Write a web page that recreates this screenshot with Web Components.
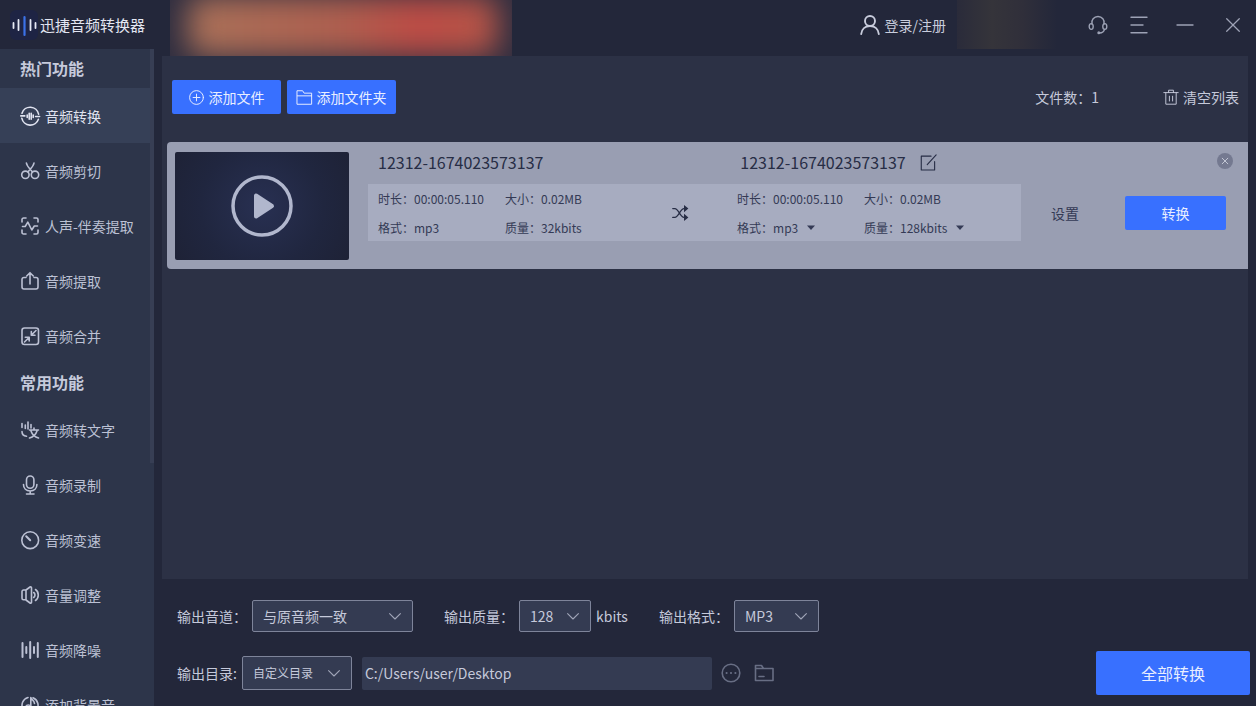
<!DOCTYPE html>
<html lang="zh-CN">
<head>
<meta charset="utf-8">
<title>迅捷音频转换器</title>
<style>
html,body{margin:0;height:100%;background:#23273a}
body{font-family:"Noto Sans CJK SC","Noto Sans",sans-serif;font-size:14px;line-height:20px;color:#c5c9da}
</style>
</head>
<body>
<converter-app></converter-app>
<script>
const ICONS = {
  convert:'<path d="M2 7.200A8.600 8.600 0 0 1 18.600 8.200M18.400 13.200A8.600 8.600 0 0 1 1.800 12.200M.8 9.900h4M15.600 10.500h4"/><path d="M7.200 9v2.400M9.200 7.200v6M11.200 7.200v6M13.200 9v2.400"/>',
  cut:'<circle cx="5.400" cy="13.800" r="3.700"/><circle cx="15" cy="13.800" r="3.700"/><path d="M6.400 2c.5 3.400 3.300 5.500 6 9M14 2c-.5 3.400-3.300 5.500-6 9"/>',
  vocal:'<path d="M2 6V3.600C2 2.700 2.700 2 3.600 2H6M14 2h2.400c.9 0 1.600.7 1.600 1.600V6M18 14v2.400c0 .9-.7 1.600-1.600 1.600H14M6 18H3.600C2.700 18 2 17.300 2 16.400V14M2.500 10.500h2.700l2.600-4.300 4 7.800 2.500-4h3.200"/>',
  extract:'<path d="M6 6.500H4C2.700 6.500 2 7.300 2 8.500V16c0 1.200.8 2 2 2h12c1.200 0 2-.8 2-2V8.500c0-1.200-.7-2-2-2h-2M10 13V2M6.700 5 10 1.700 13.300 5"/>',
  merge:'<rect x="2" y="2" width="16.500" height="16.500" rx="2.500"/><path d="M16 4.500 11.500 9M11.300 5.500v3.700H15M4.500 16 9 11.500M5.300 11.300h3.900V15"/>',
  text:'<path d="M2 3.500v4M5.300 5v3.500M8 2v7M11 4.500V8M2 11.500c0 3 1.500 4.500 4.500 4.800M9.500 10h9M14 8v2M11 11c1 3 3.500 6 7.500 7M17 11c-1 3-4 6-7.500 7"/>',
  mic:'<rect x="6.500" y="1" width="7.400" height="12.300" rx="3.700"/><path d="M3.500 9.500c0 4 2.700 6.500 6.700 6.500s6.700-2.500 6.700-6.500M10.200 16v3M6.500 19h7.500"/>',
  speed:'<circle cx="10.200" cy="10.200" r="8.400"/><path d="m6.200 6.200 4 4" stroke-width="2"/>',
  volume:'<path d="M6 5H3.500C2.700 5 2 5.700 2 6.500v6.800c0 .8.700 1.500 1.500 1.500H6M6 5l4-3c.7-.5 1.500 0 1.500.8v14.400c0 .8-.8 1.300-1.500.8l-4-3zM13.700 7.500c1.700 1.200 1.700 3.800 0 5M15.500 4.500c3.700 2.500 3.700 8.500 0 11"/>',
  noise:'<path d="M2.500 3v14M6.300 7v6M10.200 2v16M14 7v6M17.800 3v14" stroke-width="2"/>',
  music:'<path d="M8 2.500a8 8 0 1 0 5 .3"/><circle cx="8.300" cy="12.500" r="2.500"/><path d="M10.800 12.500V2.500c.5 2.500 3.700 2.700 3.700 6"/>',
  add:'<circle cx="10" cy="10" r="9.200"/><path d="M10 5.500v9M5.500 10h9"/>',
  folder:'<path d="M.5 1h7l2 3.200h10V19H.5zM.5 7.800h19"/>',
  trash:'<path d="M1 4.500h18M7 4.500V1.500h6v3M3.500 4.500V19h13V4.500M8 9v6M12 9v6"/>',
  user:'<circle cx="10" cy="6" r="5"/><path d="M1.200 19c.5-5 4-8 8.800-8s8.300 3 8.800 8"/>',
  headset:'<path d="M4 9C3 5 6 1.500 10 1.500S17 5 16 9"/><ellipse cx="3.200" cy="11.500" rx="2" ry="2.900"/><ellipse cx="16.800" cy="11.500" rx="2" ry="2.900"/><path d="M16.500 14.400c-.5 2.200-2.500 3.600-5 3.600"/><circle cx="10.800" cy="17.800" r=".8"/>',
  menu:'<path d="M2 2.300h16M2 10h12M2 17.700h16"/>',
  minus:'<path d="M2 10h16"/>',
  close:'<path d="m3 3 14 14M17 3 3 17"/>',
  edit:'<path d="M13 2.500H1.500v16.300h15.700V9M8.500 12.500 19 1"/>',
  shuffle:'<path d="M1 4.500h2.500c5 0 6.500 11 11.500 11h2M1 15.500h2.500c5 0 6.500-11 11.500-11h2"/><path d="M15 0 20.500 4.500 15 9zM15 11l5.500 4.500L15 20z" fill="currentColor" stroke="none"/>',
  down:'<path d="m1 6 9 9 9-9"/>',
  caret:'<path d="M0 4h20L10 15z" fill="currentColor" stroke="none"/>',
  more:'<circle cx="10" cy="10" r="8.800"/><path d="M5.500 10h.2M9.900 10h.2M14.300 10h.2" stroke-width="1.900"/>',
  browse:'<path d="M1.500 17.500V2.500h6l2 3H19v12zM1.500 5.500h8M5 13.500h5"/>'
};

const define = (name, render) => customElements.define(name, class extends HTMLElement {
  connectedCallback() {
    if (!this.shadowRoot) this.attachShadow({mode:'open'}).innerHTML = render(this);
  }
});
const BUTTON = 'button{font:inherit;color:inherit;background:none;border:0;padding:0;margin:0;cursor:pointer}';

define('x-icon', el => `<style>
:host{display:inline-block;flex:none;width:var(--size,20px);height:var(--size,20px)}
svg{display:block;width:100%;height:100%;overflow:visible;fill:none;stroke:currentColor;stroke-width:var(--stroke,1.6);stroke-linecap:round;stroke-linejoin:round}
</style><svg viewBox="0 0 20 20" aria-hidden="true">${ICONS[el.getAttribute('name')]}</svg>`);

define('app-brand', () => `<style>
:host{display:flex;align-items:center;height:49px;padding-left:10px;gap:2px;color:#e3e6f2;font-size:15px;white-space:nowrap}
svg{width:28px;height:30px;flex:none}
</style>
<svg viewBox="0 0 28 30" aria-hidden="true"><rect width="28" height="30" rx="6" fill="#1e2444"/>
<g stroke="#e6e9f5" stroke-width="1.800" stroke-linecap="round"><path d="M3.500 13v5M8.500 10v10M20.500 10v10M25.500 13v5"/><path d="M14.500 7v18" stroke="#3b72e8" stroke-width="2.200"/></g></svg>
<span><slot></slot></span>`);

define('nav-item', el => `<style>
:host{display:block}
a{display:flex;align-items:center;gap:5px;height:55px;padding-left:20px;color:#bcc1d4;text-decoration:none;white-space:nowrap;line-height:18px}
:host([active]) a{background:#364057;color:#e0e3f0}
</style><a href="#${el.getAttribute('icon')}"><x-icon name="${el.getAttribute('icon')}"></x-icon><slot></slot></a>`);

define('nav-group', el => `<style>
:host{display:block}
h2{margin:0;height:39px;padding-left:20px;line-height:39px;font-size:16px;font-weight:700;color:#c5cadb}
</style><h2>${el.getAttribute('label')}</h2><slot></slot>`);

define('side-nav', () => `<style>
:host{display:flex;flex:1;min-height:0;background:#2d354a;overflow:hidden}
nav{flex:1;min-width:0;overflow:hidden}
.rail{width:4px}
.thumb{height:63%;background:#373e54}
</style><nav><slot></slot></nav><div class="rail"><div class="thumb"></div></div>`);

define('title-bar', () => `<style>${BUTTON}
:host{display:flex;align-items:stretch;height:56px;overflow:hidden}
.promo{width:342px;margin-left:8px;background:#2f2e40;overflow:hidden;display:flex}
.promo i{flex:1;margin:-4px 14px 0 18px;border-radius:14px;filter:blur(15px);background:linear-gradient(90deg,#ab7259,#b0604f 50%,#bf4c45 74%,#b45748)}
.grow{flex:1}
.bar{display:flex;align-items:center;height:49px}
.login{display:flex;align-items:center;gap:5px;color:#c9cddd;line-height:18px;--stroke:1.9}
.glow{width:100px;height:49px;margin-left:11px;background:linear-gradient(90deg,#2a2b3a,#35343a 35%,#302f3a 65%,#23273a)}
.tools{display:flex;align-items:center;color:#9da2b5;--stroke:1.4}
.tools button{display:flex}
</style>
<div class="promo"><i></i></div><div class="grow"></div>
<div class="bar"><button class="login"><x-icon name="user"></x-icon>登录/注册</button><div class="glow"></div>
<div class="tools">
<button aria-label="客服" style="margin-left:31px"><x-icon name="headset"></x-icon></button>
<button aria-label="菜单" style="margin-left:21px"><x-icon name="menu"></x-icon></button>
<button aria-label="最小化" style="margin-left:26px"><x-icon name="minus"></x-icon></button>
<button aria-label="关闭" style="margin:0 14px 0 29px"><x-icon name="close" style="--size:18px"></x-icon></button>
</div></div>`);

define('primary-button', el => `<style>${BUTTON}
:host{display:block;flex:none;width:var(--w,109px);height:var(--h,34px);--size:15px;--stroke:1.3}
button{display:flex;align-items:center;justify-content:center;gap:5px;width:100%;height:100%;background:#3870ff;color:#e8eeff;border-radius:2px;white-space:nowrap}
</style><button>${el.hasAttribute('icon') ? `<x-icon name="${el.getAttribute('icon')}"></x-icon>` : ''}<slot></slot></button>`);

define('list-toolbar', () => `<style>${BUTTON}
:host{display:flex;align-items:center;gap:6px;padding:0 9px 0 10px}
.count{margin-left:auto;margin-right:58px}
.clear{display:flex;align-items:center;gap:4px;--size:16px;--stroke:1.2}
</style>
<primary-button icon="add">添加文件</primary-button><primary-button icon="folder">添加文件夹</primary-button>
<span class="count">文件数：1</span><button class="clear"><x-icon name="trash"></x-icon>清空列表</button>`);

define('inline-select', el => `<style>
:host{display:inline-flex}
label{display:flex;align-items:center}
select{appearance:none;font:inherit;color:inherit;border:0;background:none;padding:0;margin:0 8px 0 0;cursor:pointer}
</style><label>${el.getAttribute('label')}：<select><option>${el.getAttribute('value')}</option></select><x-icon name="caret" style="--size:8px"></x-icon></label>`);

define('file-card', el => `<style>${BUTTON}
:host{position:relative;display:flex;align-items:center;padding:10px 22px 9px 8px;background:#999eb2;border-radius:4px 0 0 4px;color:#343a55}
.thumb{display:grid;place-items:center;flex:none;width:174px;height:108px;border-radius:2px;background:radial-gradient(circle,#283052,#20263f 60%,#1e2236)}
.thumb svg{width:62px;height:62px}
.info{align-self:flex-start;flex:1;min-width:0;margin:0 30px 0 19px}
.names,.data{display:grid;padding-left:10px}
.names{grid-template-columns:364fr 282fr;height:20px;margin-bottom:12px;font-size:16px;line-height:18px;color:#272d45}
.names>div{display:flex;align-items:center;gap:14px}
.edit{display:flex;--size:17px;--stroke:1.3}
.data{grid-template-columns:127fr 167fr 65fr 127fr 157fr;grid-template-rows:30px 27px;align-items:center;font-size:12px;background:#a7acc0;white-space:nowrap}
.swap{grid-column:3;grid-row:1/3;--size:16px;--stroke:1.8;color:#272d45}
.actions{display:flex;align-items:center;gap:46px;padding-top:14px}
.remove{position:absolute;top:11px;right:15px;display:grid;place-items:center;width:16px;height:16px;border-radius:50%;background:#747990;color:#c2c6d4;--size:8px;--stroke:2.5}
</style>
<button class="thumb" aria-label="播放"><svg viewBox="0 0 62 62" fill="none"><circle cx="31" cy="31" r="29" stroke="#b1b7cd" stroke-width="3.500"/><path d="M25 20.500v21L41 31z" fill="#b1b7cd" stroke="#b1b7cd" stroke-width="4" stroke-linejoin="round"/></svg></button>
<div class="info">
<div class="names"><div>${el.getAttribute('name')}</div><div>${el.getAttribute('name')}<button class="edit" aria-label="重命名"><x-icon name="edit"></x-icon></button></div></div>
<div class="data"><span>时长：00:00:05.110</span><span>大小：0.02MB</span><x-icon class="swap" name="shuffle"></x-icon><span>时长：00:00:05.110</span><span>大小：0.02MB</span>
<span style="grid-column:1">格式：mp3</span><span>质量：32kbits</span><inline-select style="grid-column:4" label="格式" value="mp3"></inline-select><inline-select label="质量" value="128kbits"></inline-select></div>
</div>
<div class="actions"><button>设置</button><primary-button style="--w:101px">转换</primary-button></div>
<button class="remove" aria-label="移除"><x-icon name="close"></x-icon></button>`);

define('select-field', el => `<style>
:host{display:flex;align-items:center;gap:5px;white-space:nowrap}
.box{display:grid;align-items:center;width:var(--w);height:var(--h,32px)}
select,x-icon{grid-area:1/1}
select{appearance:none;width:100%;height:100%;margin:0;padding:0 10px;font:inherit;font-size:var(--fs,14px);color:#c5c9da;background:#343b52;border:1px solid #7e849a;border-radius:2px}
x-icon{justify-self:end;margin-right:12px;--size:12px;--stroke:1.8;color:#a0a5b8;pointer-events:none}
</style><label for="s">${el.getAttribute('label')}</label><span class="box"><select id="s">${el.getAttribute('options').split(',').map(o => `<option>${o}</option>`).join('')}</select><x-icon name="down"></x-icon></span><slot></slot>`);

define('output-settings', () => `<style>${BUTTON}
:host{display:block;padding:21px 6px 11px 15px}
.row{display:flex;align-items:center}
.first{gap:31px;margin-bottom:19px}
.second{height:44px}
input{box-sizing:border-box;flex:0 1 350px;min-width:120px;height:33px;margin:0 9px 0 10px;padding:0 3px;border:0;border-radius:2px;background:#343b52;color:#c5c9da;font:inherit}
.tool{display:flex;color:#686e84;margin-right:13px}
primary-button{margin-left:auto;font-size:16px;--w:154px;--h:44px}
</style>
<div class="row first">
<select-field style="--w:161px" label="输出音道：" options="与原音频一致,立体声,单声道"></select-field>
<select-field style="--w:72px" label="输出质量：" options="128,192,320">kbits</select-field>
<select-field style="--w:85px" label="输出格式：" options="MP3,WAV,FLAC"></select-field>
</div>
<div class="row second">
<select-field style="--w:110px;--h:34px;--fs:12px" label="输出目录:" options="自定义目录,原文件目录"></select-field>
<input aria-label="输出路径" value="C:/Users/user/Desktop">
<button class="tool" aria-label="更改目录"><x-icon name="more"></x-icon></button>
<button class="tool" aria-label="打开文件夹"><x-icon name="browse"></x-icon></button>
<primary-button>全部转换</primary-button>
</div>`);

define('converter-app', () => `<style>
:host{display:grid;grid-template-columns:154px minmax(0,1fr);column-gap:8px;height:100vh;overflow:hidden}
aside,section{display:flex;flex-direction:column;min-height:0}
main{flex:1;min-height:0;margin-right:8px;padding-top:24px;background:#2c3145}
file-card{margin:28px 0 0 5px}
</style>
<aside><app-brand>迅捷音频转换器</app-brand>
<side-nav>
<nav-group label="热门功能"><nav-item icon="convert" active>音频转换</nav-item><nav-item icon="cut">音频剪切</nav-item><nav-item icon="vocal">人声-伴奏提取</nav-item><nav-item icon="extract">音频提取</nav-item><nav-item icon="merge">音频合并</nav-item></nav-group>
<nav-group label="常用功能"><nav-item icon="text">音频转文字</nav-item><nav-item icon="mic">音频录制</nav-item><nav-item icon="speed">音频变速</nav-item><nav-item icon="volume">音量调整</nav-item><nav-item icon="noise">音频降噪</nav-item><nav-item icon="music">添加背景音</nav-item></nav-group>
</side-nav></aside>
<section><title-bar></title-bar>
<main><list-toolbar></list-toolbar><file-card name="12312-1674023573137"></file-card></main>
<output-settings></output-settings></section>`);
</script>
</body>
</html>
